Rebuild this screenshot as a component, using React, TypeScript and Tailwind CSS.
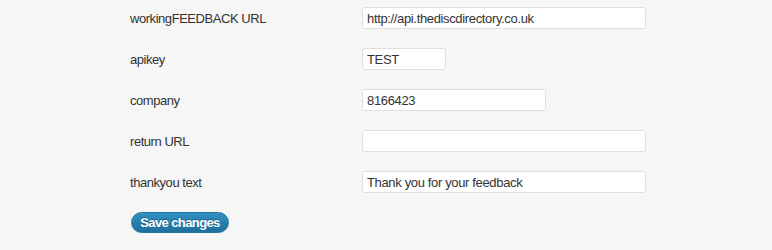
import React from 'react';

const fields = [
  { label: 'workingFEEDBACK URL', value: 'http://api.thediscdirectory.co.uk', width: 'w-[284px]' },
  { label: 'apikey', value: 'TEST', width: 'w-[84px]' },
  { label: 'company', value: '8166423', width: 'w-[184px]' },
  { label: 'return URL', value: '', width: 'w-[284px]' },
  { label: 'thankyou text', value: 'Thank you for your feedback', width: 'w-[284px]' },
];

export default function App() {
  return (
    <div className="w-[772px] h-[250px] bg-[#f6f6f6] pl-[130px] pt-[7px] font-['Liberation_Sans',Arial,sans-serif] text-[13px] text-[#333]">
      <div className="flex flex-col gap-[19px]">
        {fields.map(f => (
          <div key={f.label} className="flex items-center h-[22px]">
            <div className="w-[232px] leading-none tracking-[-0.45px]">{f.label}</div>
            <input
              type="text"
              defaultValue={f.value}
              className={`${f.width} h-[22px] bg-white border border-[#dfdfdf] rounded-[3px] px-[4px] text-[13px] text-[#333] tracking-[-0.35px] outline-none font-['Liberation_Sans',Arial,sans-serif]`}
            />
          </div>
        ))}
        <div className="flex">
          <button className="ml-[1px] w-[98px] h-[21px] rounded-full border border-[#21759b] bg-gradient-to-b from-[#3190c1] to-[#1f6f9c] text-white font-bold text-[13px] leading-none tracking-[-0.6px] [text-shadow:0_-1px_0_rgba(0,0,0,0.3)]">
            Save changes
          </button>
        </div>
      </div>
    </div>
  );
}
